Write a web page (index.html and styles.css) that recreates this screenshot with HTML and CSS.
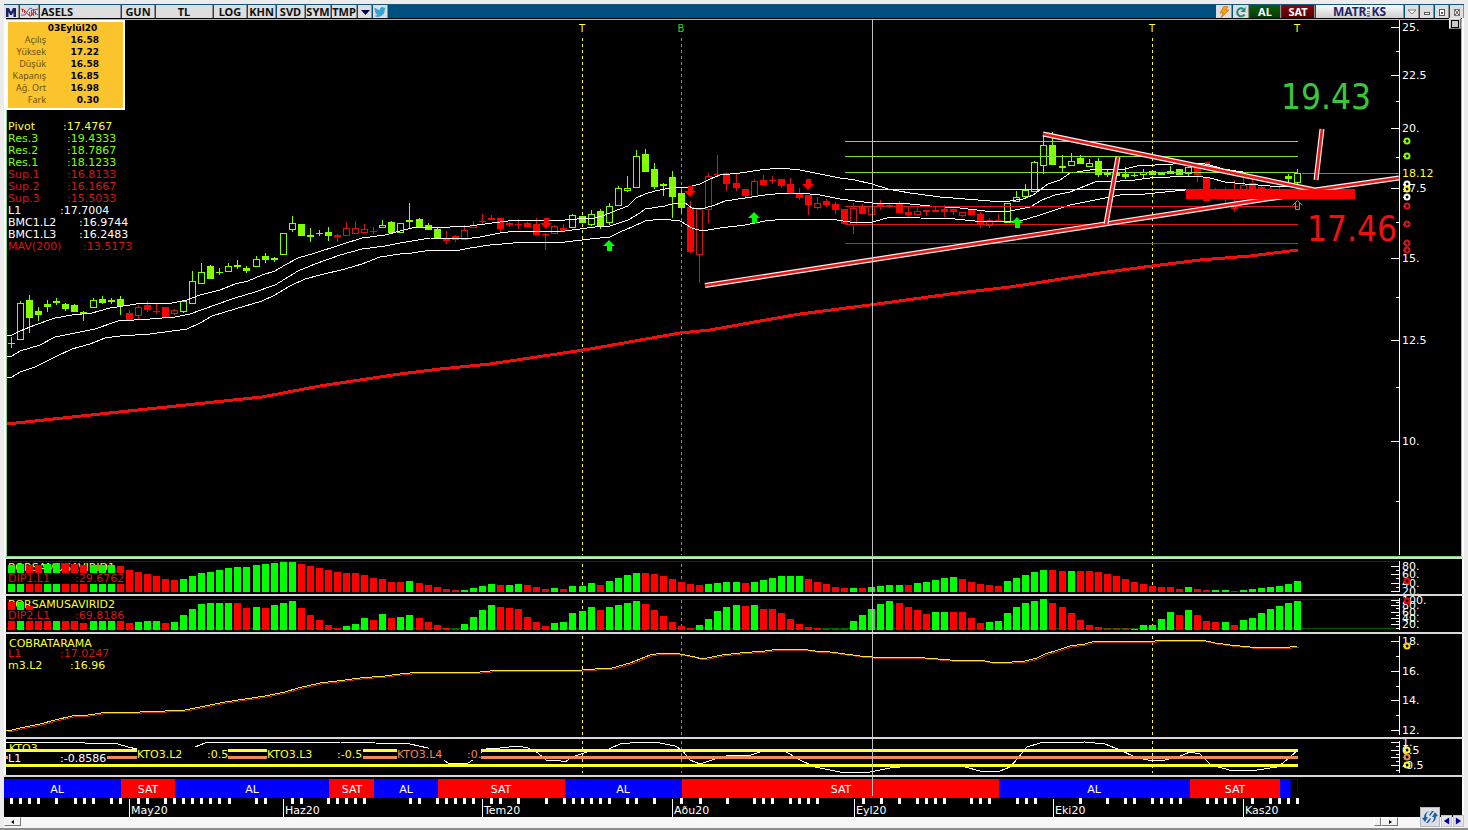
FILE: index.html
```html
<!DOCTYPE html>
<html lang="tr">
<head>
  <meta charset="UTF-8" />
  <meta name="viewport" content="width=device-width, initial-scale=1.0" />
  <title>ASELS - Matriks</title>
  <link rel="stylesheet" href="styles.css">
</head>
<body>
  <!-- Toolbar -->
  <header class="toolbar">
    <button class="tool-btn w-icon" aria-label="Menu">
      <svg class="icon" viewBox="0 0 12 12"><path d="M1 11V2h3l2 4 2-4h3v9H8.500V6L6.800 9H5.200L3.500 6v5z" fill="#1c1f60"/></svg>
    </button>
    <button class="tool-btn w-wave" aria-label="Grafik">
      <svg class="icon-wide" viewBox="0 0 17 12">
        <path d="M1.500 3v3M3.500 4v3M8.500 6v4M10.500 4v6M12.500 3v7M14.500 5v4" stroke="#d82830" stroke-width="1"/>
        <path d="M0 3Q3 3 5 6T9 10T13 4L17 3" fill="none" stroke="#d01820" stroke-width="1"/>
        <path d="M0 9L4 9L8 3L10 2L13 6L17 9" fill="none" stroke="#5a5f96" stroke-width="1"/>
      </svg>
    </button>
    <input class="symbol" type="text" value="ASELS" aria-label="Sembol" />
    <button class="tool-btn w-gun">GUN</button>
    <button class="tool-btn w-tl">TL</button>
    <button class="tool-btn w-gun">LOG</button>
    <button class="tool-btn w-mid">KHN</button>
    <button class="tool-btn w-mid">SVD</button>
    <button class="tool-btn w-small">SYM</button>
    <button class="tool-btn w-small">TMP</button>
    <button class="tool-btn w-win" aria-label="Şablon seç">
      <svg class="icon" viewBox="0 0 12 12"><path d="M2 4h9L6.500 9z" fill="#000050"/></svg>
    </button>
    <button class="tool-btn w-icon" aria-label="Twitter">
      <svg class="icon" viewBox="0 0 24 24"><path fill="#35a4dc" d="M24 4.600a10 10 0 0 1-2.800.8 5 5 0 0 0 2.100-2.700 10 10 0 0 1-3.100 1.200 4.900 4.900 0 0 0-8.400 4.500A14 14 0 0 1 1.700 3.200a4.900 4.900 0 0 0 1.500 6.500 5 5 0 0 1-2.200-.6 4.900 4.900 0 0 0 3.900 4.900 5 5 0 0 1-2.200.1 4.900 4.900 0 0 0 4.600 3.400A10 10 0 0 1 0 19.500 14 14 0 0 0 21.500 7.100 10 10 0 0 0 24 4.600z"/></svg>
    </button>
    <div class="spacer"></div>
    <button class="tool-btn w-tool" aria-label="Hızlı emir">
      <svg class="icon" viewBox="0 0 12 12"><path d="M6 0h4L8 4h3L3 12L5 7H2z" fill="#f5a010" stroke="#b86a10" stroke-width=".6"/></svg>
    </button>
    <button class="tool-btn w-tool" aria-label="Yenile">
      <svg class="icon" viewBox="0 0 12 12"><path d="M9.500 8.500A4 4 0 1 1 8.500 3" fill="none" stroke="#20897c" stroke-width="2"/><path d="M10.500 1v5h-5z" fill="#20897c"/></svg>
    </button>
    <button class="tool-btn buy">AL</button>
    <button class="tool-btn sell">SAT</button>
    <button class="tool-btn brand">MATR<svg class="dots" viewBox="0 0 3 10"><path d="M0 0h3v2h-3zM0 4h3v1h-3zM0 6h3v1h-3zM0 8h3v2h-3z" fill="#4a7fc0"/></svg>KS</button>
    <button class="tool-btn w-win" aria-label="Aç">
      <svg class="icon" viewBox="0 0 12 12"><path d="M2 4h8L6 8z" fill="#fff" stroke="#777"/></svg>
    </button>
    <button class="tool-btn w-win" aria-label="Küçült">
      <svg class="icon" viewBox="0 0 12 12"><rect x="3.500" y="6.500" width="5" height="2" fill="#fff" stroke="#555"/></svg>
    </button>
    <button class="tool-btn w-win" aria-label="Büyüt">
      <svg class="icon" viewBox="0 0 12 12"><rect x="3.500" y="3.500" width="5" height="6" fill="#fff" stroke="#555"/><path d="M5 6h2v2H5z" fill="#555"/></svg>
    </button>
    <button class="tool-btn w-win" aria-label="Kapat">
      <svg class="icon" viewBox="0 0 12 12"><rect x="3.500" y="3.500" width="5" height="6" fill="#fff" stroke="#777"/><path d="M4 4l4 5M8 4l-4 5" stroke="#444"/></svg>
    </button>
  </header>

  <!-- Charts -->
  <main class="charts">
    <section class="panel price">
      <svg id="price" viewBox="6 18 1456 539" role="img" aria-label="ASELS fiyat grafiği"></svg>
      <table class="quote">
        <caption>03Eylül20</caption>
        <tbody>
          <tr><th scope="row">Açılış</th><td>16.58</td></tr>
          <tr><th scope="row">Yüksek</th><td>17.22</td></tr>
          <tr><th scope="row">Düşük</th><td>16.58</td></tr>
          <tr><th scope="row">Kapanış</th><td>16.85</td></tr>
          <tr><th scope="row">Ağ. Ort</th><td>16.98</td></tr>
          <tr><th scope="row">Fark</th><td>0.30</td></tr>
        </tbody>
      </table>
      <button class="pane-btn" aria-label="Pencere"></button>
    </section>
    <section class="panel">
      <svg id="dip1" viewBox="6 559 1456 35" role="img" aria-label="DIP1"></svg>
    </section>
    <section class="panel">
      <svg id="dip2" viewBox="6 596 1456 36" role="img" aria-label="DIP2"></svg>
    </section>
    <section class="panel">
      <svg id="cobra" viewBox="6 634 1456 103" role="img" aria-label="COBRATARAMA"></svg>
    </section>
    <section class="panel">
      <svg id="kto" viewBox="6 739 1456 36" role="img" aria-label="KTO3"></svg>
    </section>
    <section class="panel signals">
      <svg id="signals" viewBox="4 777 1458 40" role="img" aria-label="AL SAT sinyalleri"></svg>
    </section>
  </main>

  <!-- Scrollbar -->
  <footer class="scroll">
    <button class="scroll-btn" aria-label="Sola kaydır"><svg class="arrow" viewBox="0 0 6 6"><path d="M4 1v4L1 3z" fill="#000"/></svg></button>
    <div class="spacer"></div>
    <button class="scroll-thumb" aria-label="Kaydırma çubuğu"></button>
    <button class="scroll-btn right" aria-label="Sağa kaydır"><svg class="arrow" viewBox="0 0 6 6"><path d="M2 1v4L5 3z" fill="#000"/></svg></button>
    <div class="corner">
      <button class="refresh" aria-label="Yenile">
        <svg viewBox="0 0 18 18"><path d="M9 3Q5 4 5 9L7 9L4 14L1 10L3 9.500Q3 4 9 3zM9 15Q13 14 13 9L11 9L14 4L17 8L15 8.500Q15 14 9 15zM11 3L13 3L9 8L8 7zM7 15L5 15L9 10L10 11z" fill="#1f5fa0"/></svg>
      </button>
      <button class="step" aria-label="Geri"><svg viewBox="0 0 10 10"><path d="M8 1v8L2 5z" fill="#0000a0"/></svg></button>
      <button class="step" aria-label="İleri"><svg viewBox="0 0 10 10"><path d="M2 1v8L8 5z" fill="#0000a0"/></svg></button>
    </div>
  </footer>

  <script src="script.js"></script>
</body>
</html>
```

FILE: styles.css
```css
* {
  box-sizing: border-box;
}

body {
  margin: 0;
  min-height: 100vh;
  padding: 4px 4px 0;
  display: flex;
  flex-direction: column;
  background: #ececec;
  border-bottom: 2px solid #8c8c8c;
  font-family: "DejaVu Sans", Verdana, sans-serif;
  font-size: 11px;
  overflow: hidden;
}

button {
  margin: 0;
  padding: 0;
  border: none;
  border-radius: 0;
  font: inherit;
  cursor: pointer;
}

/* Toolbar */
.toolbar {
  display: flex;
  gap: 1px;
  height: 14px;
  background: #00507f;
  border-top: 1px solid #16587c;
  font-family: "Noto Sans", Tahoma, sans-serif;
  font-weight: bold;
}

.tool-btn,
.symbol {
  height: 13px;
  background: #dedede;
  color: #111;
  border: 0 solid #8f8f8f;
  border-right-width: 1px;
  line-height: 13px;
  text-align: center;
}

.tool-btn {
  display: flex;
  align-items: center;
  justify-content: center;
}

.symbol {
  width: 81px;
  padding: 0 1px;
  font: inherit;
  text-align: left;
  border-radius: 0;
}

.w-icon { width: 15px; }
.w-wave { width: 19px; }
.w-tool { width: 16px; }
.w-gun { width: 33px; }
.w-tl { width: 57px; }
.w-mid { width: 28px; }
.w-small { width: 25px; }
.w-win { width: 14px; }

.icon {
  width: 12px;
  height: 12px;
}

.icon-wide {
  width: 17px;
  height: 12px;
}

.spacer {
  flex: 1;
}

.buy,
.sell {
  width: 31px;
  color: #fff;
  background: linear-gradient(#0c5c0c, #003c00);
}

.sell {
  width: 33px;
  background: linear-gradient(#8a0808, #500000);
}

.brand {
  width: 88px;
  background: linear-gradient(#fafafa, #cfcfcf);
  color: #24246c;
  font-size: 12px;
}

.dots {
  width: 3px;
  height: 10px;
  margin: 0 1px;
}

/* Chart panels */
.charts {
  display: flex;
  flex-direction: column;
}

.panel {
  position: relative;
  background: #000;
  border: 2px solid #fff;
  border-top-color: #d8d8d8;
  border-bottom: none;
}

.panel > svg {
  display: block;
  width: 100%;
  height: auto;
}

.price {
  border-top: none;
}

.signals {
  border-left: none;
}

svg text {
  font-family: "DejaVu Sans", Verdana, sans-serif;
  font-size: 11px;
}

svg .big {
  font-family: "DejaVu Sans Condensed", Tahoma, sans-serif;
  font-size: 35px;
}

svg .session {
  font-size: 10px;
  text-anchor: middle;
}

.crisp {
  shape-rendering: crispEdges;
}

.quote {
  position: absolute;
  top: 2px;
  left: 0;
  width: 119px;
  padding: 1px 0 2px;
  background: #fcc42c;
  border: 2px solid #fff;
  border-spacing: 0;
  font-size: 9px;
  line-height: 12px;
}

.quote caption {
  position: relative;
  top: 2px;
  height: 12px;
  padding-left: 14px;
  margin-bottom: -12px;
  font-weight: bold;
  z-index: 1;
}

.quote tbody::before {
  content: "";
  display: block;
  height: 11px;
}

.quote th {
  width: 38px;
  padding: 0;
  font-family: "Noto Sans", Tahoma, sans-serif;
  font-weight: normal;
  color: #6b5210;
  text-align: right;
}

.quote td {
  padding: 0 24px 0 0;
  font-weight: bold;
  text-align: right;
}

.pane-btn {
  position: absolute;
  top: 0;
  right: 1px;
  width: 12px;
  height: 11px;
  background: #c8c8c8;
  border: 1px solid #eee;
  border-right-color: #777;
  border-bottom-color: #777;
}

.pane-btn::before {
  content: "";
  display: block;
  width: 6px;
  height: 6px;
  margin: 1px auto;
  border: 1px solid #000;
}

/* Scrollbar */
.scroll {
  position: relative;
  display: flex;
  flex: 1;
  min-height: 9px;
  background: #f6f6f6;
}

.scroll-btn,
.scroll-thumb {
  display: flex;
  align-items: center;
  justify-content: center;
  width: 17px;
  height: 9px;
  background: #f2f2f2;
  border: 1px solid #fff;
  border-right-color: #777;
  border-bottom-color: #777;
}

.scroll-thumb {
  width: 7px;
}

.scroll-btn.right {
  margin-right: 66px;
}

.arrow {
  width: 6px;
  height: 6px;
}

.corner {
  position: absolute;
  right: 0;
  bottom: 1px;
  display: flex;
  align-items: flex-end;
  gap: 1px;
}

.refresh {
  width: 20px;
  height: 20px;
  background: #dce0e6;
  border: 1px solid #b8b8b8;
}

.step {
  width: 11px;
  height: 12px;
  background: #e4e4e8;
  border: 1px solid #c4c4c4;
}

.refresh svg,
.step svg {
  display: block;
  width: 100%;
  height: 100%;
}
```

FILE: script.js
```js
const NS = "http://www.w3.org/2000/svg";
const LIME = "#80ff00", GREEN = "#00ff00", RED = "#ff0000", DARK = "#d81414";
const YELLOW = "#ffff30", WHITE = "#ffffff", ORANGE = "#f08850";

// Drawing helpers
function add(svg, tag, attrs, text) {
  const el = document.createElementNS(NS, tag);
  for (const key in attrs) el.setAttribute(key, attrs[key]);
  if (text !== undefined) el.textContent = text;
  svg.appendChild(el);
  return el;
}
const rect = (svg, x, y, width, height, fill) =>
  add(svg, "rect", { x, y, width, height, fill, class: "crisp" });
const hline = (svg, x1, x2, y, color) => rect(svg, x1, y, x2 - x1, 1, color);
const vline = (svg, x, y1, y2, color) => rect(svg, x, y1, 1, y2 - y1, color);
const label = (svg, x, y, color, text, extra) =>
  add(svg, "text", { x, y, fill: color, ...extra }, text);
const curve = (svg, points, stroke, width = 1) =>
  add(svg, "polyline", { points, fill: "none", stroke, "stroke-width": width, class: "crisp" });
function dashed(svg, x, y1, y2, color) {
  for (let y = y1; y < y2; y += 6) vline(svg, x, y, Math.min(y + 3, y2), color);
}
function axis(svg, y1, y2, major, minor) {
  vline(svg, 1399, y1, y2, WHITE);
  major.forEach(([y, text]) => {
    hline(svg, 1391, 1399, y, WHITE);
    if (text) label(svg, 1402, y + 4, WHITE, text);
  });
  minor.forEach(y => hline(svg, 1396, 1399, y, WHITE));
}
function marker(svg, y, color) {
  add(svg, "circle", { cx: 1407, cy: y, r: 2.5, fill: "#000", stroke: color, "stroke-width": 2 });
  hline(svg, 1403, 1406, y, color);
}
const barX = i => 8 + i * 9.0563;
const price = document.getElementById("price");

// Frame of the price panel
add(price, "rect", { x: 6.5, y: 19.5, width: 1455, height: 537, fill: "none", stroke: "#7ed87e", class: "crisp" });

// Session lines
[[582, YELLOW, "T"], [681, "#30d030", "B"], [1152, YELLOW, "T"], [1297, YELLOW, "T"]].forEach(([x, color, text]) => {
  if (x !== 1297) dashed(price, x, 38, 555, color);
  label(price, x, 32, color, text, { class: "session" });
});

// Candles: type (capital = filled), high, body top, body bottom, low
const candles = `
G337,343,344,348 g301,303,339,339 G295,300,318,333 G307,311,315,321 G300,304,307,312 G298,301,303,305
G303,304,309,311 G304,305,312,312 G311,312,314,321 g298,300,307,307 G296,299,303,304 G298,300,302,304
G296,299,306,315 R310,313,320,320 r305,307,315,319 R301,305,310,312 R303,311,312,314 R307,307,317,317
r309,310,313,315 g300,301,311,313 g271,281,303,303 g263,272,283,283 G265,266,279,279 G268,272,273,275
g263,266,271,272 G260,265,267,269 G266,268,271,273 g256,259,266,267 G253,256,260,263 G257,258,260,262
g233,233,254,254 g216,223,229,232 G224,224,236,236 G228,235,237,242 G230,233,234,236 G227,232,236,241
R234,235,237,242 r222,228,235,235 r221,228,233,233 r224,229,232,233 R227,231,232,234 g220,225,227,228
G221,222,233,233 g223,223,232,232 G203,220,222,228 G218,219,227,227 G223,225,230,230 G228,229,238,239
R231,239,241,244 R235,236,240,242 r225,230,239,239 r221,225,227,227 R214,221,222,224 R215,218,220,220
R218,218,229,232 R222,223,225,227 R219,224,225,229 R222,223,227,227 R218,224,235,235 R233,234,235,250
r225,226,233,233 R224,228,231,231 g214,215,227,228 G216,216,223,223 g210,214,224,226 G209,211,226,229
g203,206,222,225 g186,188,205,206 g176,188,190,192 g150,156,187,188 G149,154,172,172 G163,169,187,189
G183,184,186,196 G171,177,197,218 G190,193,208,213 R201,207,252,253 r209,209,254,283 r173,176,209,223
R155,174,175,175 R172,173,184,191 R174,183,188,191 R189,189,196,199 r179,181,196,197 R175,180,185,186
R176,180,181,184 R179,179,186,188 R178,184,193,193 R188,193,198,200 R195,195,205,215 r197,203,207,209
R199,201,205,207 R202,204,210,214 R209,209,224,224 r203,208,224,234 R204,206,214,214 r206,206,214,214
R200,204,207,210 R203,205,206,208 R201,204,213,213 R207,212,215,217 r207,211,214,216 R210,210,212,216
R207,210,212,212 R205,209,212,217 R209,209,212,215 r212,212,215,217 R209,209,215,215 R212,214,225,228
r218,220,225,228 R214,220,221,222 g203,203,222,222 g191,197,201,202 g184,190,196,196 g161,162,191,191
g136,145,165,174 G132,145,165,165 G155,166,168,172 g153,161,165,165 G155,158,164,164 g159,163,166,166
G158,161,175,177 G170,172,175,177 G169,172,176,176 G167,174,177,179 G172,175,176,177 g169,172,174,178
G171,171,175,175 G172,173,175,175 G166,171,174,174 G169,169,175,175 g167,167,173,176 R166,166,175,182
R177,177,201,201 R188,190,199,199 R188,195,199,204 R180,207,209,212 r177,185,191,191 R180,183,189,189
R186,187,189,189 R186,189,190,190 R186,189,190,190 G174,176,179,182 g169,173,182,184`.trim().split(/\s+/);

candles.forEach((candle, i) => {
  const [high, top, bottom, low] = candle.slice(1).split(",").map(Number);
  const type = candle[0];
  const filled = type === "G" || type === "R";
  const green = type.toLowerCase() === "g";
  const x = Math.round(barX(i));
  const color = green ? LIME : filled ? RED : DARK;
  const wick = green ? LIME : DARK;
  if (top > high) vline(price, x + 3, high, top, wick);
  if (low > bottom) vline(price, x + 3, bottom, low, wick);
  if (filled) rect(price, x, top, 7, Math.max(1, bottom - top), color);
  else add(price, "rect", { x: x + 0.5, y: top + 0.5, width: 6, height: bottom - top, fill: "none", stroke: color, class: "crisp" });
});
rect(price, 1205, 162, 5, 5, RED);

// Moving bands
curve(price, "7,336 12,335 20,331 35,325 55,318 72,315 92,313 110,308 130,305 142,303 160,304 172,303 187,300 200,295 220,290 235,284 248,281 262,275 275,271 285,265 298,258 315,253 340,245 362,238 385,235 400,231 412,228 425,227 450,227 470,226 485,224 500,222 517,220 565,220 577,219 595,218 605,215 612,212 620,209 628,206 636,198 645,194 655,191 665,189 675,187 688,187 700,184 710,179 720,175 740,173 760,170 780,168 800,170 820,174 840,178 855,180 872,184 888,189 910,193 940,197 965,199 990,201 1010,201 1023,199 1033,195 1040,190 1048,184 1060,180 1070,173 1090,170 1125,169 1137,166 1173,164 1200,163 1210,165 1223,169 1243,172 1283,173 1298,172", WHITE);
curve(price, "7,357 12,356 20,351 40,345 55,337 75,333 95,329 118,321 150,319 175,317 190,314 215,305 235,298 255,292 275,285 285,279 298,271 315,264 340,255 362,249 385,246 400,243 412,241 430,238 465,239 480,237 500,233 517,231 565,231 580,229 595,227 610,226 628,220 640,213 645,209 665,206 675,203 685,203 692,208 705,208 715,205 725,201 745,198 765,195 785,193 800,193 820,195 840,199 855,201 872,203 900,203 930,206 960,208 985,211 1010,211 1030,207 1042,200 1055,195 1070,192 1085,186 1095,182 1120,181 1135,180 1150,178 1170,177 1195,176 1210,178 1225,182 1245,184 1270,186 1300,187", WHITE);
curve(price, "7,378 12,377 20,372 35,367 55,357 72,349 90,344 105,338 120,336 150,334 187,329 200,323 212,316 235,309 262,301 275,295 290,286 305,279 320,275 345,269 362,264 380,257 400,254 412,253 425,251 445,250 455,251 470,248 490,245 525,242 565,242 590,239 610,237 620,232 632,227 645,221 662,219 680,221 692,228 702,231 720,228 745,225 765,221 785,219 830,219 850,222 868,223 880,220 890,217 920,218 955,219 975,221 1000,222 1020,221 1040,215 1055,210 1070,205 1095,200 1120,195 1145,194 1165,192 1185,190", WHITE);
curve(price, "7,424 100,414 262,397 320,386 400,374 440,369 490,364 530,358 590,349 680,333 710,330 760,321 800,314 870,305 950,294 1010,287 1055,280 1100,273 1152,266 1200,260 1250,256 1298,250", "#f01010", 3);

// Pivot levels
[[141, "#80e040"], [156, "#80e040"], [172, "#80e040"], [189, YELLOW], [206, "#e01818"], [224, "#e01818"], [243, "#e01818"]]
  .forEach(([y, color]) => hline(price, 845, 1298, y, color));
hline(price, 1302, 1399, 173, "#30b030");

// Signal arrows
const up = (x, y) => add(price, "path", { d: `M${x} ${y}l6 6h-3v5h-5v-5h-4z`, fill: GREEN });
const down = (x, y) => add(price, "path", { d: `M${x} ${y}l6 -6h-3v-5h-5v5h-4z`, fill: RED });
up(609, 240);
up(754, 212);
up(1017, 217);
down(690, 197);
down(546, 229);
down(808, 190);
add(price, "path", { d: "M1292.5 205.500l5-5l5 5M1295.500 203v6.500h4V203", fill: "none", stroke: "#20e020" });

// Trend lines and target zone
rect(price, 1186, 189, 169, 10, RED);
["M705 285.500L1300 194", "M1043 134L1315 190L1399 178", "M1118 157L1106 224", "M1322 129L1316 180"].forEach(d => {
  add(price, "path", { d, fill: "none", stroke: "#fff0f0", "stroke-width": 5 });
  add(price, "path", { d, fill: "none", stroke: "#e81818", "stroke-width": 2.6 });
});
rect(price, 1186, 190, 169, 9, RED);
label(price, 1281, 109, "#38c838", "19.43", { class: "big" });
label(price, 1307, 241, "#f01010", "17.46", { class: "big" });

axis(price, 20, 555,
  [[27, "25."], [75, "22.5"], [128, "20."], [188, "17.5"], [258, "15."], [340, "12.5"], [441, "10."]],
  [51, 101, 157, 222, 297, 387, 501]);
rect(price, 1401, 168, 33, 11, "#000");
label(price, 1402, 177, YELLOW, "18.12");
[[141, LIME], [156, LIME], [184, WHITE], [197, WHITE], [189, YELLOW], [206, DARK], [224, DARK], [243, DARK], [250, DARK]]
  .forEach(([y, color]) => marker(price, y, color));

// Indicator legend
[["Pivot", 63, ":17.4767", YELLOW], ["Res.3", 67, ":19.4333", LIME], ["Res.2", 67, ":18.7867", LIME],
 ["Res.1", 67, ":18.1233", LIME], ["Sup.1", 67, ":16.8133", DARK], ["Sup.2", 67, ":16.1667", DARK],
 ["Sup.3", 67, ":15.5033", DARK], ["L1", 60, ":17.7004", WHITE], ["BMC1.L2", 79, ":16.9744", WHITE],
 ["BMC1.L3", 79, ":16.2483", WHITE], ["MAV(200)", 83, ":13.5173", DARK]].forEach(([name, x, value, color], i) => {
  label(price, 8, 130 + i * 12, color, name);
  label(price, x, 130 + i * 12, color, value);
});

// Histogram panels
function histogram(svg, data, base) {
  data.trim().split(/\s+/).forEach((bar, i) => {
    const height = Number(bar.slice(1));
    const color = { G: GREEN, R: RED, D: "#704000" }[bar[0]];
    rect(svg, Math.round(barX(i)), base - height, 7, height, color);
  });
}

const dip1 = document.getElementById("dip1");
hline(dip1, 6, 1399, 561, "#700000");
dashed(dip1, 582, 564, 594, YELLOW);
dashed(dip1, 681, 564, 594, "#30d030");
dashed(dip1, 1152, 564, 594, YELLOW);
label(dip1, 8, 571, YELLOW, "BORSAMUSAVIRID1");
histogram(dip1, `
G27 G28 R27 R27 G28 G29 R29 R28 R27 G27 G27 G27 R26 R22 R20 R18 R16 R13 R12 G13 G16 G19 G20 G22 G24 G25 G25 G27
G28 G29 G30 G30 R28 R26 R24 R22 R20 R19 R19 R17 R14 R13 R10 R10 G11 R9 R7 R5 R3 R2 G2 G4 G6 G8 R7 G7 G8 R7 R5 R3
G4 R3 G6 G6 G9 R7 G11 G14 G17 G19 R19 R18 R16 R13 R10 R8 R7 G8 G9 G10 G10 R9 G10 G12 G14 G16 G16 G16 R13 R10 R8
R5 R4 G4 R4 G5 G6 G7 G7 R7 G9 G10 G12 G14 G15 R13 R10 R8 R7 R6 G11 G14 G17 G20 G22 R22 R21 G21 R21 R21 R20 R18
R16 R13 R10 R8 R6 R5 R5 R3 G5 R3 R2 G2 G2 R1 G2 G3 G4 G5 G6 G8 G11`, 592);
rect(dip1, 7, 573, 117, 11, "#000");
label(dip1, 8, 582, DARK, "DIP1.L1");
label(dip1, 75, 582, DARK, ":29.6762");
axis(dip1, 561, 592, [[566, "80."], [574, "60."], [583, "40."], [591, "20."]], [570, 578, 587]);
marker(dip1, 581, RED);

const dip2 = document.getElementById("dip2");
hline(dip2, 6, 1399, 599, "#700000");
hline(dip2, 6, 1399, 628, "#006000");
dashed(dip2, 582, 600, 630, YELLOW);
dashed(dip2, 681, 600, 630, "#30d030");
dashed(dip2, 1152, 600, 630, YELLOW);
label(dip2, 8, 608, YELLOW, "BORSAMUSAVIRID2");
histogram(dip2, `
R28 G28 R24 R9 R9 G9 R9 R9 R7 G9 G9 G9 R9 R7 G8 G9 G9 R7 G8 G15 G21 G26 G27 G27 G27 R27 R22 G23 R22 G25 G27 G29
R22 R15 R10 R5 R2 G4 G6 G12 R10 G16 R12 G13 G15 R12 R8 R5 R2 D1 G6 G13 G20 G25 R23 R22 R21 R13 R8 R4 G7 G8 G17
G19 G23 R20 G23 G25 G27 G29 R26 R20 R14 R8 R4 R2 G5 G11 G19 G23 G25 R24 G25 R21 R21 R17 R11 R6 R3 R2 D1 D1 D1 G9
G15 G21 G26 G29 R27 R23 R20 R16 G18 G18 R18 R18 R12 R7 G8 G9 G17 G23 G27 G29 G31 R27 R23 R17 R10 R5 R3 D2 D2 D2
G1 G5 G5 G11 G18 R15 G20 R15 R9 R8 G8 R5 G10 G12 G17 G21 G24 G27 G29`, 630);
rect(dip2, 7, 610, 117, 11, "#000");
label(dip2, 8, 619, DARK, "DIP2.L1");
label(dip2, 75, 619, DARK, ":69.8186");
axis(dip2, 598, 630, [[600, "100."], [605, "80."], [612, "60."], [618, "40."], [624, "20."]], [602, 608, 615, 621, 628]);
marker(dip2, 601, RED);

// Cobra panel
const cobra = document.getElementById("cobra");
dashed(cobra, 582, 636, 736, YELLOW);
dashed(cobra, 681, 636, 736, "#30d030");
dashed(cobra, 1152, 636, 736, YELLOW);
const cobraLine = "6,730 12,730 20,728 40,724 55,720 72,716 88,715 108,712 140,712 165,711 185,710 200,707 225,702 245,699 265,696 285,692 298,688 320,683 345,680 360,678 385,676 400,674 420,672 450,672 470,673 490,671 510,670 540,670 565,671 582,670 595,669 612,668 630,663 640,659 650,655 662,653 680,654 695,657 702,659 712,657 722,655 740,653 765,651 780,649 800,649 815,651 830,652 845,654 860,656 872,657 900,657 925,658 950,660 980,660 990,662 1012,662 1025,661 1037,658 1045,654 1058,650 1070,646 1085,644 1095,641 1130,641 1155,641 1175,640 1202,640 1215,643 1230,645 1250,647 1270,647 1290,647 1297,646";
add(cobra, "polyline", { points: cobraLine, fill: "none", stroke: "#b03000", transform: "translate(2 1)", class: "crisp" });
curve(cobra, cobraLine, "#ffe040");
label(cobra, 9, 647, YELLOW, "COBRATARAMA");
label(cobra, 8, 657, DARK, "L1");
label(cobra, 60, 657, DARK, ":17.0247");
label(cobra, 8, 669, YELLOW, "m3.L2");
label(cobra, 70, 669, YELLOW, ":16.96");
axis(cobra, 636, 735, [[641, "18."], [671, "16."], [700, "14."], [730, "12."]], [656, 686, 715]);
marker(cobra, 646, "#ffd800");

// KTO panel
const kto = document.getElementById("kto");
dashed(kto, 582, 741, 773, YELLOW);
dashed(kto, 681, 741, 773, "#30d030");
dashed(kto, 1152, 741, 773, YELLOW);
label(kto, 9, 752, YELLOW, "KTO3");
curve(kto, "6,743 15,742 70,742 85,743 118,744 128,747 137,749 160,756 180,756 195,747 205,743 235,742 340,742 375,743 410,744 428,748 438,756 448,763 468,763 473,760 481,753 486,749 500,748 518,746 528,748 538,753 546,760 557,760 565,762 572,757 590,751 609,749 620,744 640,742 660,743 675,746 682,750 690,760 700,764 715,759 730,755 748,756 760,752 785,751 798,759 815,767 840,772 870,772 890,768 910,766 965,767 980,771 1000,771 1010,767 1018,758 1027,747 1040,743 1085,742 1105,744 1120,750 1135,757 1152,761 1165,760 1178,757 1190,752 1200,754 1211,765 1233,771 1257,770 1277,767 1283,763 1297,751", WHITE);
rect(kto, 6, 749, 1292, 3, YELLOW);
rect(kto, 6, 756, 1292, 3, ORANGE);
[[8, 753, 99, 11], [137, 747, 91, 13], [267, 747, 96, 13], [397, 749, 84, 11]].forEach(([x, y, w, h]) => rect(kto, x, y, w, h, "#000"));
rect(kto, 6, 764, 1292, 3, YELLOW);
label(kto, 8, 762, WHITE, "L1");
label(kto, 60, 762, WHITE, ":-0.8586");
[[137, "KTO3.L2", 207, ":0.5", YELLOW], [267, "KTO3.L3", 337, ":-0.5", YELLOW], [397, "KTO3.L4", 467, ":0.", ORANGE]].forEach(([x1, name, x2, value, color]) => {
  label(kto, x1, 758, color, name);
  label(kto, x2, 758, color, value);
});
axis(kto, 741, 773, [[742, "1."], [750, "0.5"], [757, ""], [765, "-0.5"]], [746, 754, 761, 770]);
marker(kto, 750, YELLOW);
marker(kto, 757, ORANGE);
marker(kto, 765, YELLOW);

// Buy / sell strip
const signals = document.getElementById("signals");
[[4, 121, "AL", 57], [121, 175, "SAT", 148], [175, 329, "AL", 252], [329, 374, "SAT", 352], [374, 438, "AL", 406],
 [438, 565, "SAT", 501], [565, 682, "AL", 623], [682, 999, "SAT", 841], [999, 1190, "AL", 1094],
 [1190, 1280, "SAT", 1235], [1280, 1290, "AL", 0]].forEach(([x1, x2, text, center]) => {
  rect(signals, x1, 779, x2 - x1, 19, text === "AL" ? "#0000ff" : RED);
  if (center) label(signals, center, 793, WHITE, text, { "text-anchor": "middle" });
});
add(signals, "rect", { x: 1290.5, y: 779.5, width: 7, height: 18, fill: "none", stroke: "#0000a0", class: "crisp" });

[11, 20, 29, 38, 56, 75, 84, 93, 111, 120, 138, 147, 165, 174, 183, 192, 201, 210, 219, 229, 256, 265, 292, 301, 328,
 337, 346, 355, 364, 410, 419, 437, 446, 455, 464, 473, 491, 500, 518, 546, 564, 573, 582, 591, 600, 609, 627, 636,
 654, 681, 700, 727, 754, 763, 772, 790, 799, 808, 817, 863, 881, 899, 917, 926, 935, 944, 971, 980, 989, 1017, 1026,
 1035, 1080, 1107, 1125, 1134, 1152, 1161, 1171, 1180, 1207, 1216, 1225, 1234, 1252, 1270, 1279, 1288, 1297]
  .forEach(x => rect(signals, x - 1, 798, 3, 6, WHITE));

[[129, "May20"], [283, "Haz20"], [482, "Tem20"], [672, "Aðu20"], [854, "Eyl20"], [1053, "Eki20"], [1243, "Kas20"]].forEach(([x, text]) => {
  vline(signals, x, 799, 817, WHITE);
  label(signals, x + 2, 814, WHITE, text);
});

// Crosshair through every panel
[[price, 19, 557], [dip1, 559, 594], [dip2, 596, 632], [cobra, 634, 737], [kto, 739, 775], [signals, 777, 796]]
  .forEach(([svg, y1, y2]) => vline(svg, 872, y1, y2, "#c0c0c0"));
```
